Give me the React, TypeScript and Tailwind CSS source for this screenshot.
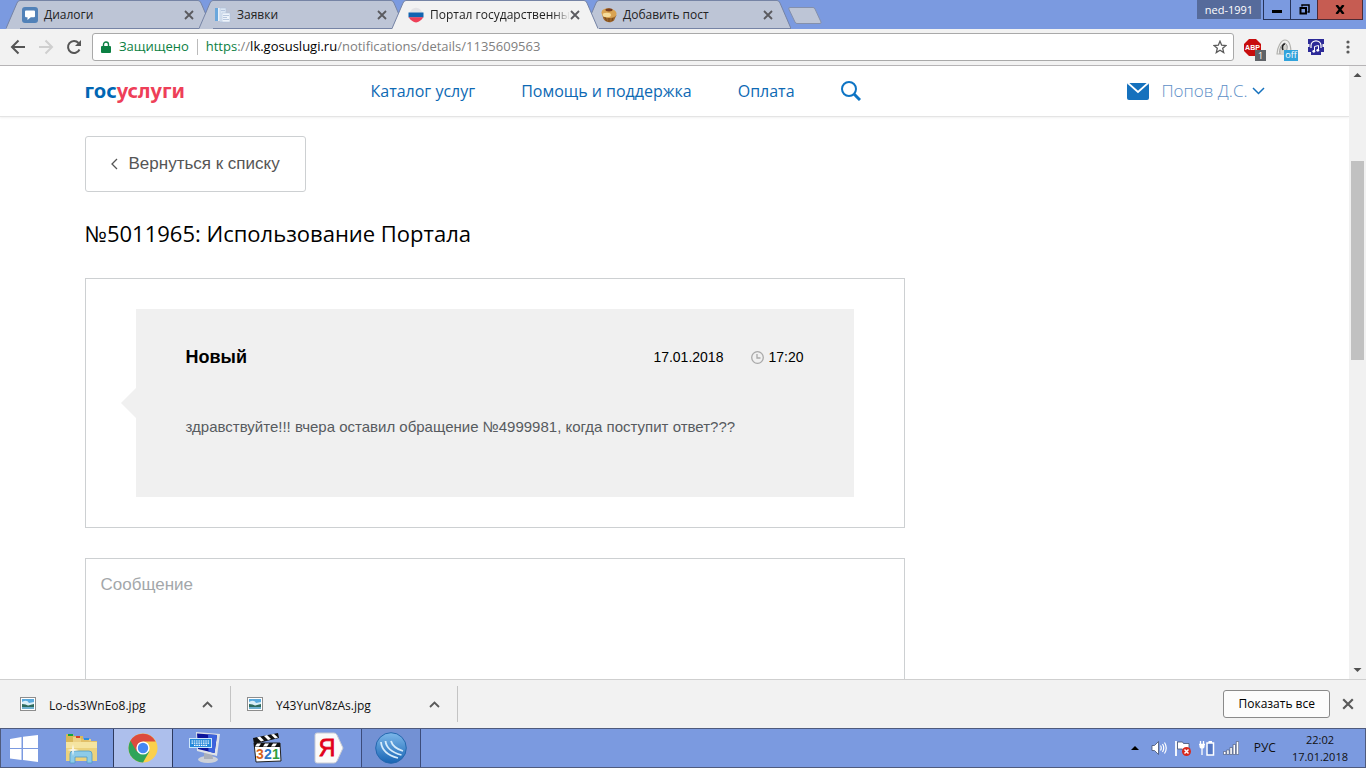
import { FunctionComponent, ReactNode } from "react";

interface TabProps {
  title: string;
  icon: ReactNode;
  active?: boolean;
}

const DialogIcon = () => (
  <svg width="16" height="16" viewBox="0 0 16 16">
    <rect width="16" height="16" rx="3" fill="#5181b8" />
    <path d="M4 3.5h8a1 1 0 0 1 1 1v4.8a1 1 0 0 1-1 1H8.8L5.5 13v-2.700H4a1 1 0 0 1-1-1V4.500a1 1 0 0 1 1-1z" fill="#fff" />
  </svg>
);

const DocsIcon = () => (
  <svg width="16" height="16" viewBox="0 0 16 16">
    <rect x="0" y="1" width="10" height="13" fill="#e9f1fa" />
    <rect x="0" y="1" width="3" height="13" fill="#6aa7dc" />
    <path d="M5 1h6v14H5z" fill="#dbe6f3" stroke="#b4c5dc" strokeWidth="0.600" />
    <path d="M7 6h8v9H7z" fill="#eef4fb" stroke="#b4c5dc" strokeWidth="0.600" />
    <path d="M6 3.500h4M8 8.500h6M8 10.500h4M8 12.500h6" stroke="#a9bdd8" strokeWidth="0.800" />
  </svg>
);

const FlagIcon = () => (
  <svg width="16" height="16" viewBox="0 0 16 16">
    <path d="M2.500 4C4 1.500 6 .8 8 .8s4 .7 5.500 3.200l1.700 2H.8z" fill="#e3e3e6" />
    <path d="M.5 5.500h15v5H.5z" fill="#1264b1" />
    <path d="M.8 10.300h14.400C14 13.500 10.500 15 8 15.500 5.500 15 2 13.500.8 10.300z" fill="#ee3f58" />
  </svg>
);

const MuffinIcon = () => (
  <svg width="16" height="16" viewBox="0 0 16 16">
    <path d="M1 7l1.500 5c2.500 3.500 7 4.500 10.500 1.500L15.500 8z" fill="#9c6428" />
    <path d="M4 10l1.500 4M8 11v4M12 10.500l-1 3.500" stroke="#6f4317" strokeWidth="0.800" />
    <ellipse cx="8" cy="6.200" rx="7.600" ry="4.800" transform="rotate(8 8 6.200)" fill="#d9a352" />
    <ellipse cx="5.800" cy="8" rx="4.200" ry="2.200" fill="#f6dc9a" />
    <ellipse cx="8" cy="2.800" rx="3.600" ry="1.600" fill="#7c3f1c" />
  </svg>
);

const Cross = ({ size, color }: { size: number; color: string }) => (
  <svg width={size} height={size} viewBox="0 0 10 10">
    <path d="M1 1l8 8M9 1L1 9" stroke={color} strokeWidth="1.800" fill="none" />
  </svg>
);

const Tab: FunctionComponent<TabProps> = ({ title, icon, active }) => {
  const fill = active ? "#f2f2f2" : "#bdc5d6";
  return (
    <div className={active ? "relative z-10 -mr-[13px] flex w-[206px]" : "-mr-[13px] flex w-[206px]"}>
      <svg width="14" height="29" viewBox="0 0 14 29" className="shrink-0">
        <path d="M0 29L11 3Q12 .5 14 .5V29z" fill={fill} />
        <path d="M0 28.500L11 3Q12 .5 14 .5" fill="none" stroke="#7684a5" />
      </svg>
      <div
        className={
          active
            ? "flex min-w-0 flex-1 items-center border-t border-[#7684a5] bg-[#f2f2f2] pl-[2px]"
            : "flex min-w-0 flex-1 items-center border-y border-[#7684a5] bg-[#bdc5d6] pl-[2px]"
        }
      >
        <span className="shrink-0">{icon}</span>
        <span
          className={
            active
              ? "ml-1.5 flex-1 whitespace-nowrap text-[12px] text-[#222] [mask-image:linear-gradient(to_right,#000_88%,transparent)]"
              : "ml-1.5 flex-1 whitespace-nowrap text-[12px] text-[#222]"
          }
        >
          {title}
        </span>
        <button type="button" aria-label="Закрыть вкладку" className="mr-1">
          <Cross size={10} color="#5a5a5f" />
        </button>
      </div>
      <svg width="14" height="29" viewBox="0 0 14 29" className="shrink-0">
        <path d="M14 29L3 3Q2 .5 0 .5V29z" fill={fill} />
        <path d={active ? "M14 28.500L3 3Q2 .5 0 .5" : "M0 28.500H14L3 3Q2 .5 0 .5"} fill="none" stroke="#7684a5" />
      </svg>
    </div>
  );
};

const TabStrip: FunctionComponent = () => (
  <div className="flex h-[29px] shrink-0 items-start bg-[#7b9ae0]">
    <div className="flex pl-[6px]">
      <Tab title="Диалоги" icon={<DialogIcon />} />
      <Tab title="Заявки" icon={<DocsIcon />} />
      <Tab title="Портал государственны" icon={<FlagIcon />} active />
      <Tab title="Добавить пост" icon={<MuffinIcon />} />
    </div>
    <button type="button" aria-label="Новая вкладка" className="mt-[6px] ml-[9px]">
      <svg width="36" height="19" viewBox="0 0 36 19">
        <path d="M3 1.500h23q1.500 0 2 1.500l6 13q.5 1.500-1 1.500H10q-1.500 0-2-1.500L1.800 3Q1.300 1.500 3 1.500z" fill="#bdc5d6" stroke="#8490ac" />
      </svg>
    </button>
    <div className="ml-auto flex h-[20px] pr-[3px]">
      <button type="button" className="mr-[2px] h-[19px] w-[64px] bg-[#566b9b] text-[11px] leading-[18px] text-white">
        ned-1991
      </button>
      <button type="button" aria-label="Свернуть" className="flex w-[28px] items-center justify-center border border-t-0 border-[#26335a]">
        <svg width="10" height="10">
          <path d="M0 5h10v3H0z" />
        </svg>
      </button>
      <button type="button" aria-label="Развернуть" className="flex w-[26px] items-center justify-center border-b border-[#26335a]">
        <svg width="11" height="11" fill="none" stroke="#000">
          <path d="M3 2.500V1h7v7H8.500" strokeWidth="1.500" />
          <path d="M1.500 4h5.500v5.500H1.500z" strokeWidth="2" />
        </svg>
      </button>
      <button type="button" aria-label="Закрыть" className="flex w-[46px] items-center justify-center border border-t-0 border-[#4d2a35] bg-[#c65c52]">
        <svg width="10" height="9" viewBox="0 0 10 9">
          <path d="M1.500 0l7 9M8.500 0l-7 9" stroke="#000" strokeWidth="2.400" />
        </svg>
      </button>
    </div>
  </div>
);

const Toolbar: FunctionComponent = () => (
  <div className="flex h-[37px] shrink-0 items-center border-b border-[#b6b4b6] bg-[#f2f2f2] pl-[10px]">
    <button type="button" aria-label="Назад">
      <svg width="16" height="16" viewBox="0 0 16 16" fill="none" stroke="#555" strokeWidth="2">
        <path d="M15 8H2.500M8.500 1.500L2 8l6.500 6.500" />
      </svg>
    </button>
    <button type="button" aria-label="Вперёд" className="ml-3">
      <svg width="16" height="16" viewBox="0 0 16 16" fill="none" stroke="#cfcfcf" strokeWidth="2">
        <path d="M1 8h12.500M7.500 1.500L14 8l-6.500 6.500" />
      </svg>
    </button>
    <button type="button" aria-label="Обновить" className="ml-3">
      <svg width="16" height="16" viewBox="0 0 16 16" fill="none" stroke="#555" strokeWidth="2">
        <path d="M13.500 10.500A6 6 0 1 1 12.500 4" />
        <path d="M15 1v6H9z" fill="#555" stroke="none" />
      </svg>
    </button>
    <div className="ml-[10px] flex h-[28px] min-w-0 flex-1 items-center rounded-[3px] border border-[#a9a9a9] bg-white px-2 text-[13px]">
      <svg width="10" height="13" viewBox="0 0 10 13" className="mr-2 shrink-0">
        <path d="M1 5h8a1 1 0 0 1 1 1v5a1 1 0 0 1-1 1H1a1 1 0 0 1-1-1V6a1 1 0 0 1 1-1z" fill="#0b8043" />
        <path d="M2.500 6V3.500a2.500 2.500 0 0 1 5 0V6" fill="none" stroke="#0b8043" strokeWidth="1.400" />
      </svg>
      <span className="text-[#0b8043]">Защищено</span>
      <span className="mx-2 h-[16px] w-px shrink-0 bg-[#bbb]" />
      <span className="flex-1 overflow-hidden whitespace-nowrap text-[#808080]">
        <span className="text-[#0b8043]">https</span>://<span className="text-black">lk.gosuslugi.ru</span>/notifications/details/1135609563
      </span>
      <button type="button" aria-label="Добавить в закладки" className="-mr-[2px]">
        <svg width="14" height="14" viewBox="0 0 14 14">
          <path d="M7 1.200l1.700 4 4.300.3-3.300 2.800 1 4.200L7 10.200l-3.700 2.300 1-4.200L1 5.500l4.300-.3z" fill="none" stroke="#5a5a5a" strokeWidth="1.300" />
        </svg>
      </button>
    </div>
    <div className="flex items-center gap-[10px] pr-[12px] pl-[10px]">
      <button type="button" className="relative mt-[6px] flex h-[22px] w-[22px] items-start" aria-label="ABP">
        <svg width="17" height="17" viewBox="0 0 17 17">
          <path d="M5 0h7l5 5v7l-5 5H5l-5-5V5z" fill="#c70d0d" />
          <text x="8.500" y="11" textAnchor="middle" fontSize="7" fontWeight="bold" fontFamily="Liberation Sans" fill="#fff">ABP</text>
        </svg>
        <span className="absolute right-0 bottom-0 h-[11px] w-[11px] bg-[#5f6368] text-center text-[9px] leading-[11px] text-white">1</span>
      </button>
      <button type="button" className="relative mt-[6px] flex h-[22px] w-[22px] items-start" aria-label="Расширение">
        <svg width="16" height="17" viewBox="0 0 16 17">
          <path d="M1 15C1 9 5 1 9 1s6 5 6 14z" fill="#f0f0ee" stroke="#b2b2ae" strokeWidth="1.200" />
          <path d="M4 15c-1-5 1-10 5-11 3 2 3 6 0 10" fill="#d5d5d0" stroke="#999" />
          <path d="M7 11c-1.500-3 0-6 2-6" fill="none" stroke="#222" strokeWidth="1.600" />
        </svg>
        <span className="absolute right-0 bottom-0 h-[11px] w-[14px] bg-[#31a3dc] text-center text-[9px] leading-[10px] text-white">off</span>
      </button>
      <button type="button" aria-label="Музыка">
        <svg width="16" height="16" viewBox="0 0 16 16">
          <path d="M0 0h16v16H0z" fill="#2c2a98" />
          <path d="M3 9V6.500a5 4.700 0 0 1 10 0V9" fill="none" stroke="#fff" strokeWidth="1.200" />
          <path d="M0 5h1.500v3H0zM14.500 5H16v3h-1.500zM0 13h3v3H0zM13 13h3v3h-3z" fill="#f2f2f2" />
          <path d="M6.500 12V7.500l4-1V11" fill="none" stroke="#fff" />
          <circle cx="5.800" cy="12.300" r="1.400" fill="#fff" />
          <circle cx="9.800" cy="11.300" r="1.400" fill="#fff" />
        </svg>
      </button>
      <button type="button" aria-label="Меню" className="ml-[8px]">
        <svg width="12" height="14" viewBox="0 0 12 14" fill="#5a5a5a">
          <circle cx="6" cy="2" r="1.600" />
          <circle cx="6" cy="7" r="1.600" />
          <circle cx="6" cy="12" r="1.600" />
        </svg>
      </button>
    </div>
  </div>
);

const SiteHeader: FunctionComponent = () => (
  <header className="h-[51px] border-b border-[#e4e4e4] shadow-[0_1px_2px_rgba(0,0,0,0.06)]">
    <div className="mx-auto flex h-[50px] max-w-[1180px] items-center text-[16px] text-[#0d69b4]">
      <a href="#" className="w-[286px] font-['Noto_Sans'] text-[20px] leading-[24px] font-bold text-[#0066b3]">
        гос<span className="text-[#ee3f58]">услуги</span>
      </a>
      <nav className="flex items-center gap-[46px]">
        <a href="#">Каталог услуг</a>
        <a href="#">Помощь и поддержка</a>
        <a href="#">Оплата</a>
        <button type="button" aria-label="Поиск">
          <svg width="20" height="20" viewBox="0 0 20 20" fill="none" stroke="#0d74c4">
            <circle cx="8" cy="8" r="7" strokeWidth="2" />
            <path d="M13 13l6 6" strokeWidth="3" />
          </svg>
        </button>
      </nav>
      <a href="#" aria-label="Сообщения" className="ml-auto">
        <svg width="22" height="17" viewBox="0 0 22 17">
          <rect width="22" height="17" rx="2" fill="#1571bd" />
          <path d="M1 0l10 9L21 0" fill="none" stroke="#fff" strokeWidth="1.800" />
        </svg>
      </a>
      <button type="button" className="ml-3 flex items-center gap-1 text-[17px] font-light text-[#5d8fc7]">
        Попов Д.С.
        <svg width="13" height="8" viewBox="0 0 13 8" fill="none" stroke="#1571bd" strokeWidth="1.500">
          <path d="M1 1l5.500 5.500L12 1" />
        </svg>
      </button>
    </div>
  </header>
);

const Page: FunctionComponent = () => (
  <div className="min-w-0 flex-1 overflow-hidden bg-white">
    <SiteHeader />
    <main className="mx-auto max-w-[1180px] pt-[19px] font-['Liberation_Sans',sans-serif]">
      <button type="button" className="flex h-[56px] items-center rounded-[3px] border border-[#cdd0d2] px-[25px] text-[17px] text-[#555]">
        <svg width="8" height="12" viewBox="0 0 8 12" className="mr-[10px]" fill="none" stroke="#555" strokeWidth="1.300">
          <path d="M6 1L1 6l5 5" />
        </svg>
        Вернуться к списку
      </button>
      <h1 className="mt-[26px] font-['Open_Sans',sans-serif] text-[22px] leading-[30px] text-black">
        №5011965: Использование Портала
      </h1>
      <section className="mt-[30px] max-w-[820px] border border-[#cdd0d2] px-[50px] py-[30px]">
        <article className="relative h-[188px] bg-[#f0f0f0] px-[50px] pt-[36px]">
          <svg width="15" height="30" viewBox="0 0 15 30" className="absolute top-[79px] -left-[15px]">
            <path d="M15 0v30L0 15z" fill="#f0f0f0" />
          </svg>
          <div className="flex items-center text-[14px] leading-[24px] text-black">
            <h2 className="text-[18px] font-bold">Новый</h2>
            <time className="ml-auto">17.01.2018</time>
            <svg width="13" height="13" viewBox="0 0 13 13" className="mr-1 ml-7" fill="none" stroke="#a9a9a9">
              <circle cx="6.500" cy="6.500" r="5.800" strokeWidth="1.300" />
              <path d="M6 3v4h3.500" strokeWidth="1.300" />
            </svg>
            <time>17:20</time>
          </div>
          <p className="mt-[46px] text-[15px] leading-[24px] text-[#575b5f]">
            здравствуйте!!! вчера оставил обращение №4999981, когда поступит ответ???
          </p>
        </article>
      </section>
      <textarea
        aria-label="Сообщение"
        placeholder="Сообщение"
        className="mt-[30px] block h-[180px] w-full max-w-[820px] resize-none border border-[#cdd0d2] px-[15px] py-[14px] text-[17px] leading-[24px] placeholder:text-[#a3a7aa]"
      />
    </main>
  </div>
);

const Scrollbar: FunctionComponent = () => (
  <div className="flex w-[17px] shrink-0 flex-col items-center bg-[#f1f1f1]">
    <svg width="17" height="17">
      <path d="M4.500 11l4-4 4 4z" fill="#505050" />
    </svg>
    <div className="mt-[78px] h-[199px] w-[13px] bg-[#c1c1c1]" />
    <svg width="17" height="17" className="mt-auto">
      <path d="M4.500 6l4 4 4-4z" fill="#505050" />
    </svg>
  </div>
);

const Download = ({ name }: { name: string }) => (
  <div className="flex h-[36px] w-[227px] items-center border-r border-[#c4c4c4] pr-[17px] pl-[16px] text-[12px] text-[#111]">
    <svg width="16" height="14" viewBox="0 0 16 14">
      <rect x=".5" y=".5" width="15" height="13" fill="#fff" stroke="#8d8d8d" />
      <path d="M2 2h12v5H2z" fill="#58a9dd" />
      <path d="M2 5q5-3 7 1l5-1v3H2z" fill="#d9eef8" />
      <path d="M2 7q4 0 6 1.500L14 7v5H2z" fill="#2d6a5c" />
      <path d="M2 10h12v2H2z" fill="#6eb0cf" />
    </svg>
    <span className="mt-1 ml-[13px]">{name}</span>
    <button type="button" aria-label="Действия с файлом" className="ml-auto">
      <svg width="11" height="7" viewBox="0 0 11 7" fill="none" stroke="#5a5a5a" strokeWidth="1.800">
        <path d="M1 6l4.500-4.500L10 6" />
      </svg>
    </button>
  </div>
);

const DownloadsBar: FunctionComponent = () => (
  <div className="flex h-[49px] shrink-0 items-center border-t border-[#cfcfcf] bg-[#f2f2f2] pr-[12px] pl-[4px]">
    <Download name="Lo-ds3WnEo8.jpg" />
    <Download name="Y43YunV8zAs.jpg" />
    <button type="button" className="ml-auto h-[28px] rounded-[3px] border border-[#8a8a8a] bg-[#fcfcfc] px-[14px] text-[12px] text-black">
      Показать все
    </button>
    <button type="button" aria-label="Закрыть панель" className="ml-[12px]">
      <Cross size={12} color="#5a5a5a" />
    </button>
  </div>
);

const ExplorerIcon = () => (
  <svg width="34" height="32" viewBox="0 0 34 32">
    <path d="M2 3q0-1 1-1h6l1 2h9v24H2z" fill="#d8b758" />
    <path d="M4 2h5v2H4z" fill="#12a53c" />
    <path d="M9 5h7l1 2h10v20H9z" fill="#ecd184" />
    <path d="M12 4h4v2h-4z" fill="#d4402a" />
    <path d="M17 7h7l1 2h8v20H17z" fill="#e2c069" />
    <path d="M20 6h5v2h-5z" fill="#2b8de0" />
    <path d="M2 10h31v19H2z" fill="#f5e4a0" />
    <path d="M2 16h31v13H2z" fill="#ecd27d" />
    <path d="M6 31V22q0-3 3-3h16q3 0 3 3v9h-5v-6H11v6z" fill="#8dcbe8" stroke="#5099c5" strokeWidth="0.800" />
    <path d="M9 12l1 5 5 1-5 1-1 5-1-5-5-1 5-1z" fill="#fff" opacity="0.800" />
  </svg>
);

const ChromeIcon = () => (
  <svg width="30" height="30" viewBox="0 0 30 30">
    <circle cx="15" cy="15" r="14.500" fill="#fbd04b" />
    <path d="M15 15L2.400 7.800A14.500 14.500 0 0 0 15 29.500l6.300-10.900z" fill="#2fa45a" />
    <path d="M2.400 7.800A14.500 14.500 0 0 1 27.600 8.400H15L8.700 18.600z" fill="#dc4b3e" />
    <circle cx="15" cy="15" r="6.600" fill="#fff" />
    <circle cx="15" cy="15" r="5.200" fill="#4688f4" />
  </svg>
);

const MonitorIcon = () => (
  <svg width="32" height="32" viewBox="0 0 32 32">
    <ellipse cx="19" cy="27.500" rx="10" ry="3.500" fill="#cdd1d8" />
    <path d="M15 20h8l1 7h-9z" fill="#a9afba" />
    <path d="M7 0l24 2-3 22-20-5z" fill="#dde2e8" />
    <path d="M8 1.500l20 1.500-2.500 18L9 17z" fill="#0c149b" />
    <path d="M19 2.500l9 .5-2.500 18-6-1.500z" fill="#3b63dd" />
    <rect x=".5" y="6.500" width="22" height="9" fill="#2589db" stroke="#cde6fa" />
    <path d="M2.500 9h18M2.500 11.200h18M5 13.400h13" stroke="#fff" strokeWidth="1.200" strokeDasharray="1.500 .8" />
  </svg>
);

const ClapperIcon = () => (
  <svg width="32" height="32" viewBox="0 0 32 32">
    <path d="M2 6L27 1l1 5L3 12z" fill="#111" />
    <path d="M6 5.500l4 4 3-1-4-4zM13 4l4 4 3-1-4-4zM20 2.500l4 4 3-1-4-3.500z" fill="#fff" />
    <path d="M3 11h26l1 18-25 1z" fill="#fff" stroke="#222" />
    <path d="M3 11h26v4H3z" fill="#111" />
    <path d="M6 11.500h4l-2 3H4zM14 11.500h4l-2 3h-4zM22 11.500h4l-2 3h-4z" fill="#fff" />
    <g fontSize="14" fontWeight="bold" fontFamily="Liberation Sans">
      <text x="5" y="27" fill="#d8641c">3</text>
      <text x="13" y="27" fill="#2975c8">2</text>
      <text x="21" y="27" fill="#2f9e3d">1</text>
    </g>
  </svg>
);

const YandexIcon = () => (
  <svg width="30" height="32" viewBox="0 0 30 32">
    <path d="M3 1h17q2 0 3 2l6 13-6 13q-1 2-3 2H3q-2 0-2-2V3q0-2 2-2z" fill="#fafafa" stroke="#c8cbd4" />
    <text
      x="13"
      y="24"
      textAnchor="middle"
      fontSize="23"
      fill="#e2001a"
      stroke="#e2001a"
      strokeWidth="0.800"
      fontFamily="Liberation Sans Narrow, Liberation Sans, sans-serif"
    >
      Я
    </text>
  </svg>
);

const GlobeIcon = () => (
  <svg width="32" height="32" viewBox="0 0 32 32">
    <defs>
      <linearGradient id="globe" x1="0" y1="0" x2="0" y2="1">
        <stop offset="0" stopColor="#7db8ea" />
        <stop offset="1" stopColor="#1764b4" />
      </linearGradient>
    </defs>
    <circle cx="16" cy="16" r="15.300" fill="url(#globe)" stroke="#2467ae" />
    <path d="M6 10q1 12 17 16M10.500 9q1 10 16 14M16 9q2 7 12 10" fill="none" stroke="#d6ebfb" strokeWidth="1.800" />
  </svg>
);

const apps = [
  { name: "Проводник", icon: <ExplorerIcon />, look: "" },
  { name: "Google Chrome", icon: <ChromeIcon />, look: "border-x border-[#2e3a5e] bg-[#adbfec]" },
  { name: "Экранная клавиатура", icon: <MonitorIcon />, look: "" },
  { name: "Media Player Classic", icon: <ClapperIcon />, look: "" },
  { name: "Яндекс", icon: <YandexIcon />, look: "" },
  { name: "Сеть", icon: <GlobeIcon />, look: "border-x border-[#3c4c7b] bg-[#7391d4]" },
];

const Taskbar: FunctionComponent = () => (
  <div className="flex h-[40px] shrink-0 items-stretch gap-[2px] border border-[#4f5b7d] bg-[#7b9ae0] text-[#111]">
    <button type="button" aria-label="Пуск" className="flex w-[48px] items-center pl-[9px]">
      <svg width="28" height="27" viewBox="0 0 28 27" fill="#fff">
        <path d="M0 4l11.500-2v11H0zM13 1.800L28 0v13H13zM0 14h11.500v11L0 23.500zM13 14h15v13l-15-2z" />
      </svg>
    </button>
    {apps.map((app) => (
      <button key={app.name} type="button" aria-label={app.name} className={`flex w-[60px] items-center justify-center ${app.look}`}>
        {app.icon}
      </button>
    ))}
    <div className="ml-auto flex items-center pr-[17px]">
      <svg width="8" height="4" className="mr-[12px]">
        <path d="M0 4l4-4 4 4z" />
      </svg>
      <div className="flex items-center gap-2">
        <svg width="16" height="16" viewBox="0 0 16 16">
          <path d="M1 5.500h2.500l4-4v13l-4-4H1z" fill="#fff" stroke="#44506e" strokeWidth="0.800" />
          <path d="M9.500 5.500q1.500 2.500 0 5M11.500 4q2.500 4 0 8M13.500 2.500q3.500 5.500 0 11" fill="none" stroke="#fff" strokeWidth="1.200" />
        </svg>
        <svg width="16" height="16" viewBox="0 0 16 16">
          <path d="M1 1v15" stroke="#fff" strokeWidth="1.800" />
          <path d="M2.500 2h5l1 1.500H14v7H8L7 9H2.500z" fill="#fff" stroke="#44506e" strokeWidth="0.800" />
          <circle cx="11.500" cy="11.500" r="4.500" fill="#d8291c" />
          <path d="M9.500 9.500l4 4M13.500 9.500l-4 4" stroke="#fff" strokeWidth="1.500" />
        </svg>
        <svg width="16" height="16" viewBox="0 0 16 16">
          <path d="M1.500 1v3M4.500 1v3M0 4.500h6M3 8v7" stroke="#fff" strokeWidth="1.300" />
          <path d="M.5 4.500h5V7Q5.500 8.500 3 8.500T.5 7z" fill="#fff" />
          <path d="M8 3h6.500v12H8z" fill="#5578c4" stroke="#fff" strokeWidth="1.500" />
          <path d="M9.500 1h3.500v2H9.500z" fill="#fff" />
        </svg>
        <svg width="16" height="16" viewBox="0 0 16 16" fill="#fff" stroke="#44506e" strokeWidth="0.600">
          <path d="M.5 11.500h2.400v3H.5zM3.700 10h2.400v4.500H3.700zM6.900 7.500h2.400v7H6.900zM10.100 4.500h2.400v10h-2.400zM13.300 1.500h2.400v13h-2.400z" />
        </svg>
      </div>
      <span className="ml-[15px] text-[12px]">РУС</span>
      <div className="ml-[16px] text-center text-[11px] leading-[17px]">
        <div>22:02</div>
        <div>17.01.2018</div>
      </div>
    </div>
  </div>
);

const App: FunctionComponent = () => {
  return (
    <div className="flex h-screen flex-col overflow-hidden font-['Open_Sans',sans-serif]">
      <TabStrip />
      <Toolbar />
      <div className="flex min-h-0 flex-1">
        <Page />
        <Scrollbar />
      </div>
      <DownloadsBar />
      <Taskbar />
    </div>
  );
};

export default App;
